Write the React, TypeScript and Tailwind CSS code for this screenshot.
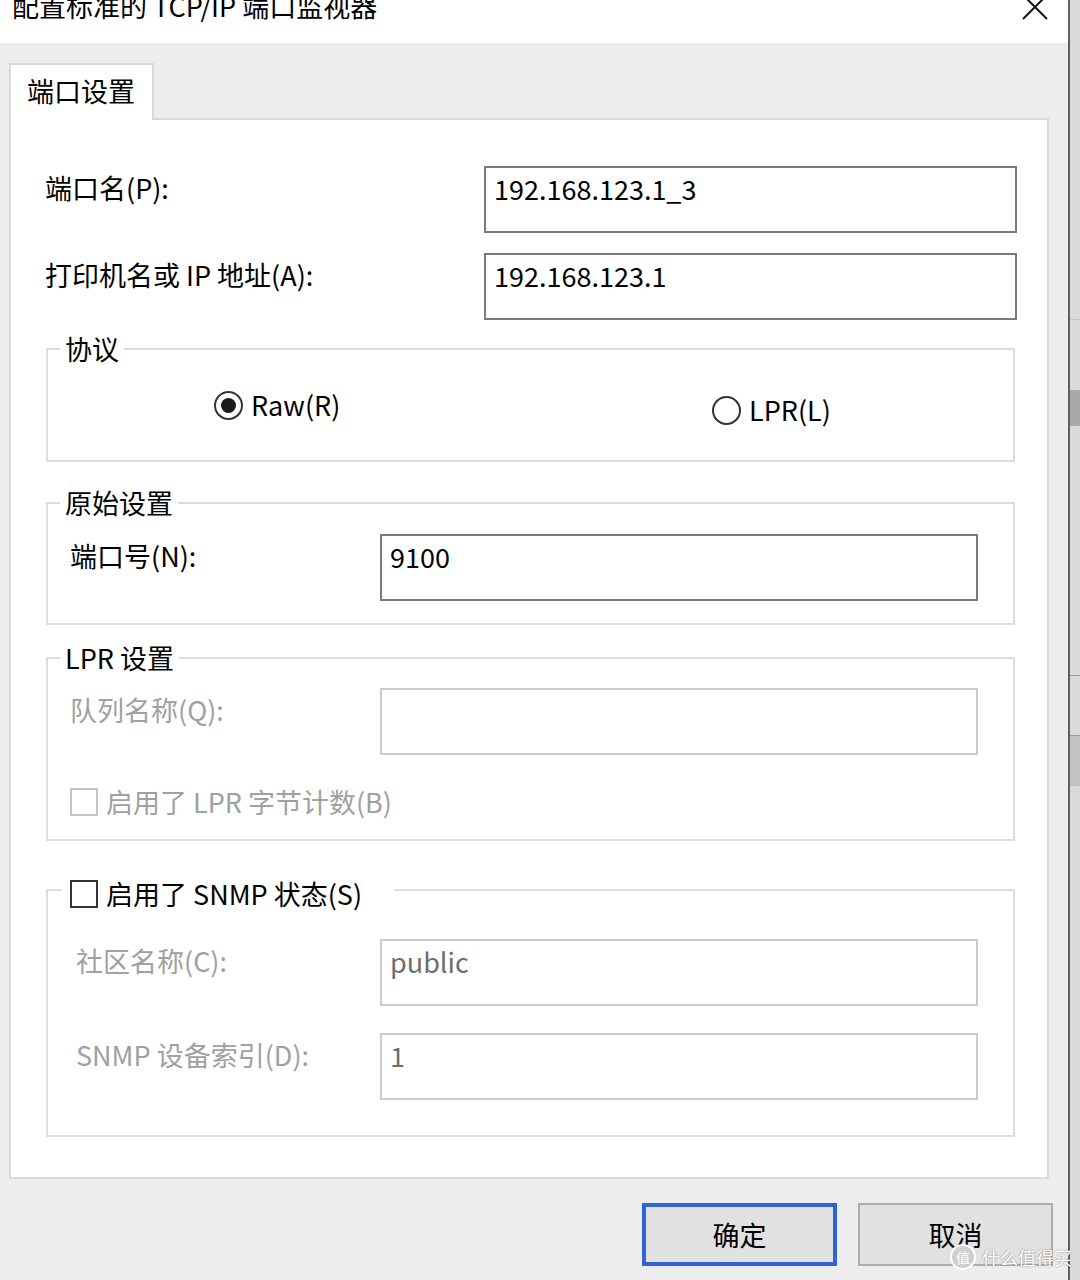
import type { ReactNode } from 'react';

const LABEL_GRAY = 'text-[#a0a0a0]';

function TextBox({ value, disabled, className }: { value?: string; disabled?: boolean; className: string }) {
  return (
    <div
      className={`h-[67px] shrink-0 border-2 bg-white pl-[8px] pt-[3px] ${
        disabled ? 'border-[#cccccc] text-[#6d6d6d]' : 'border-[#7a7a7a] text-black'
      } ${className}`}
    >
      {value}
    </div>
  );
}

function Radio({ checked }: { checked?: boolean }) {
  return (
    <span className="flex h-[29px] w-[29px] shrink-0 items-center justify-center rounded-full border-2 border-[#333333] bg-white">
      {checked && <span className="h-[15px] w-[15px] rounded-full bg-[#1a1a1a]" />}
    </span>
  );
}

function CheckBox({ disabled }: { disabled?: boolean }) {
  return (
    <span
      className={`h-[28px] w-[28px] shrink-0 border-2 bg-white ${
        disabled ? 'border-[#c4c4c4]' : 'border-[#333333]'
      }`}
    />
  );
}

function GroupBox({
  legend,
  legendClass = 'ml-[12px] px-[5px]',
  className,
  children,
}: {
  legend: ReactNode;
  legendClass?: string;
  className: string;
  children: ReactNode;
}) {
  return (
    <fieldset className={`ml-[35px] w-[969px] shrink-0 border-2 border-[#dcdcdc] ${className}`}>
      <legend className={`h-[36px] ${legendClass}`}>{legend}</legend>
      {children}
    </fieldset>
  );
}

// label + edit box inside a group box (edit box always starts at x 380)
function GroupRow({
  label,
  value,
  disabled,
  indent,
  className,
}: {
  label: string;
  value?: string;
  disabled?: boolean;
  indent: string;
  className: string;
}) {
  return (
    <div className={`flex ${className}`}>
      <div className={`w-[332px] shrink-0 whitespace-nowrap pt-[4px] ${indent} ${disabled ? LABEL_GRAY : ''}`}>
        {label}
      </div>
      <TextBox value={value} disabled={disabled} className="w-[598px]" />
    </div>
  );
}

export default function App() {
  return (
    <div className="relative flex h-[1280px] w-[1080px] overflow-hidden bg-[#ededed] font-['Noto_Sans_CJK_SC',sans-serif] text-[27px] leading-[36px] text-black">
      <div className="flex w-[1068px] shrink-0 flex-col">
        {/* title bar */}
        <div className="flex h-[43px] shrink-0 items-start justify-between bg-white">
          <div className="-mt-[12px] ml-[12px] whitespace-nowrap">配置标准的 TCP/IP 端口监视器</div>
          <svg className="-mt-[6px] mr-[20px]" width="26" height="26" viewBox="0 0 26 26">
            <path d="M1 1L25 25M25 1L1 25" stroke="#111111" strokeWidth="2" fill="none" />
          </svg>
        </div>

        <div className="flex flex-1 flex-col px-[9px] pt-[20px]">
          {/* tab */}
          <div className="relative z-10 -mb-[2px] h-[57px] w-[145px] border-2 border-b-0 border-[#d9d9d9] bg-white pl-[16px] pt-[8px]">
            端口设置
          </div>

          {/* tab page */}
          <div className="flex h-[1061px] w-[1040px] flex-col border-2 border-[#d9d9d9] bg-white">
            <div className="ml-[34px] mt-[46px] flex">
              <div className="w-[439px] shrink-0 pt-[4px]">端口名(P):</div>
              <TextBox value="192.168.123.1_3" className="w-[533px]" />
            </div>
            <div className="ml-[34px] mt-[20px] flex">
              <div className="w-[439px] shrink-0 pt-[4px]">打印机名或 IP 地址(A):</div>
              <TextBox value="192.168.123.1" className="w-[533px]" />
            </div>

            <GroupBox legend="协议" className="mt-[11px] h-[131px]">
              <div className="flex items-start">
                <div className="ml-[166px] mt-[20px] flex w-[498px] items-center gap-[8px]">
                  <Radio checked />
                  <span>Raw(R)</span>
                </div>
                <div className="mt-[25px] flex items-center gap-[8px]">
                  <Radio />
                  <span>LPR(L)</span>
                </div>
              </div>
            </GroupBox>

            <GroupBox legend="原始设置" className="mt-[23px] h-[140px]">
              <GroupRow label="端口号(N):" value="9100" indent="pl-[22px]" className="mt-[13px]" />
            </GroupBox>

            <GroupBox legend="LPR 设置" className="mt-[15px] h-[201px]">
              <GroupRow label="队列名称(Q):" disabled indent="pl-[22px]" className="mt-[12px]" />
              <div className="mt-[29px] flex items-center gap-[8px] pl-[22px]">
                <CheckBox disabled />
                <span className={LABEL_GRAY}>启用了 LPR 字节计数(B)</span>
              </div>
            </GroupBox>

            <GroupBox
              legend={
                <span className="flex items-center gap-[8px]">
                  <CheckBox />
                  <span>启用了 SNMP 状态(S)</span>
                </span>
              }
              legendClass="ml-[14px] pl-[8px] pr-[32px] pt-[4px]"
              className="mt-[31px] h-[265px]"
            >
              <GroupRow label="社区名称(C):" value="public" disabled indent="pl-[28px]" className="mt-[31px]" />
              <GroupRow label="SNMP 设备索引(D):" value="1" disabled indent="pl-[28px]" className="mt-[27px]" />
            </GroupBox>
          </div>

          {/* buttons */}
          <div className="mt-[24px] flex justify-end gap-[21px] pr-[6px]">
            <button className="h-[63px] w-[195px] border-[4px] border-[#2f64d4] bg-[#e1e1e1] leading-[36px]">确定</button>
            <button className="h-[63px] w-[195px] border-2 border-[#adadad] bg-[#e1e1e1] leading-[36px]">取消</button>
          </div>
        </div>
      </div>

      {/* edge of the window behind */}
      <div className="flex flex-1 flex-col border-l-2 border-[#5f5f5f] bg-[#dadada]">
        <div className="h-[320px] border-b border-[#c4c4c4]" />
        <div className="h-[70px]" />
        <div className="h-[36px] bg-[#a8a8a8]" />
        <div className="h-[250px] border-b border-[#9a9a9a]" />
        <div className="h-[60px] border-b border-[#9a9a9a]" />
        <div className="h-[50px] bg-[#c2c2c2]" />
      </div>

      {/* site watermark */}
      <div className="absolute left-[950px] top-[1244px] flex items-center gap-[6px] text-white">
        <span className="flex h-[26px] w-[26px] items-center justify-center rounded-full border-2 border-white bg-[#cfcfcf] text-[14px] leading-none">
          值
        </span>
        <span className="whitespace-nowrap text-[18px] leading-[22px] [text-shadow:0_0_2px_rgba(0,0,0,0.45)]">
          什么值得买
        </span>
      </div>
    </div>
  );
}
